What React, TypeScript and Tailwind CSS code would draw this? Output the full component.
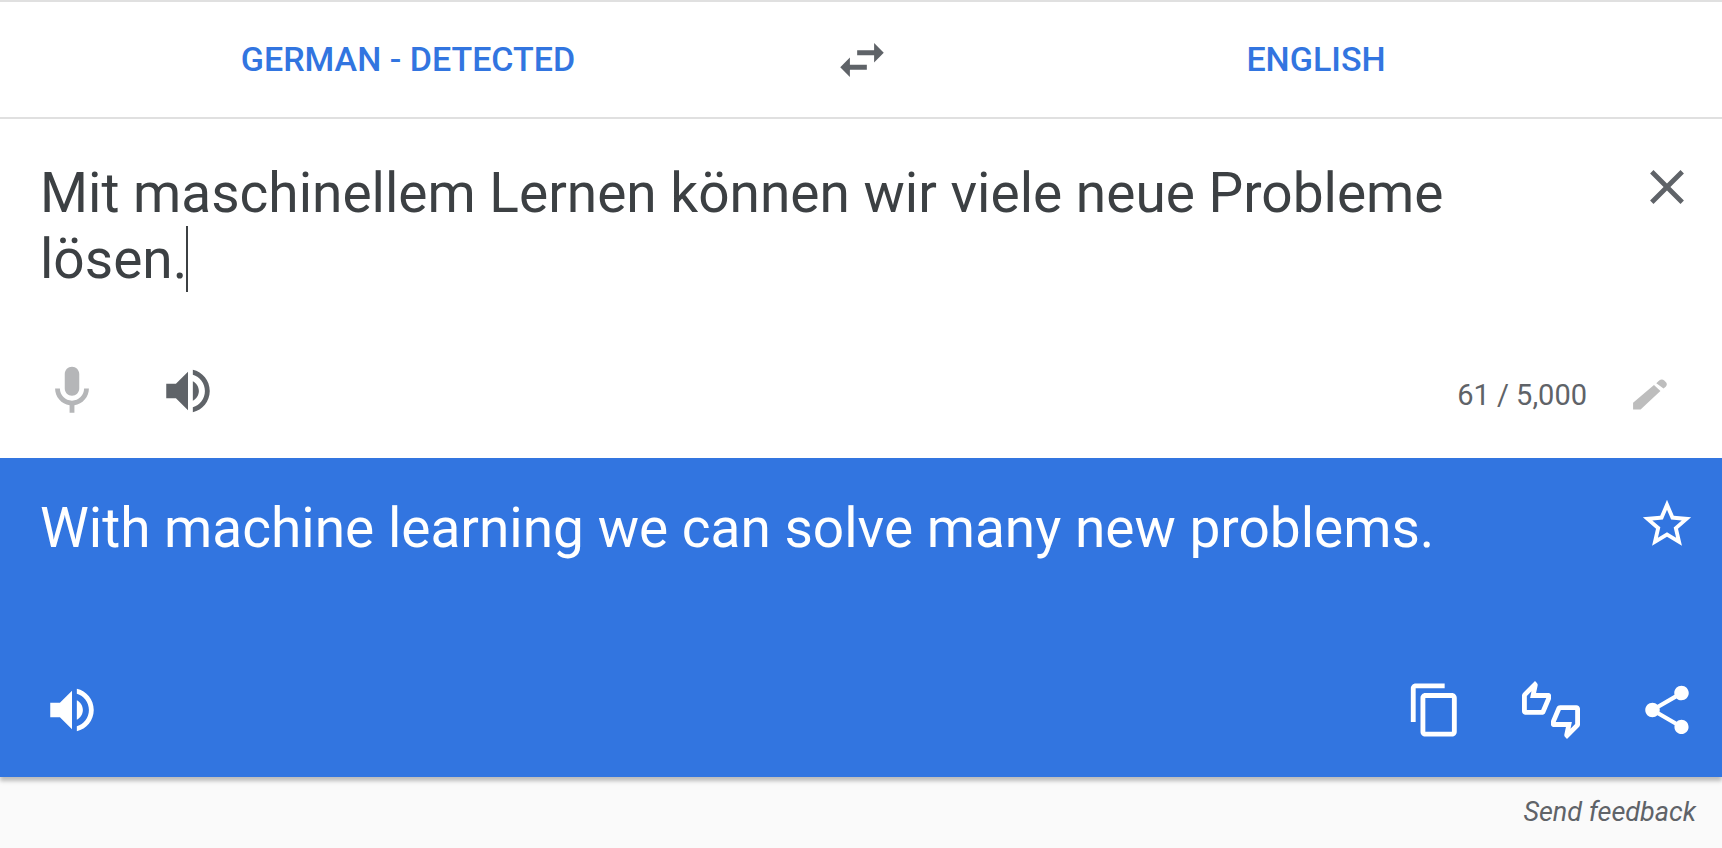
import React, { useState } from "react";

const ICONS = {
  swap: "M6.99 11L3 15l3.99 4v-3H14v-2H6.99v-3zM21 9l-3.99-4v3H10v2h7.01v3L21 9z",
  close: "M19 6.41L17.59 5 12 10.59 6.41 5 5 6.41 10.59 12 5 17.59 6.41 19 12 13.41 17.59 19 19 17.59 13.41 12z",
  mic: "M12 14c1.66 0 3-1.34 3-3V5c0-1.66-1.34-3-3-3S9 3.34 9 5v6c0 1.66 1.34 3 3 3zm5-3c0 2.76-2.24 5-5 5s-5-2.24-5-5H5c0 3.53 2.61 6.43 6 6.92V21h2v-3.08c3.39-.49 6-3.39 6-6.92h-2z",
  volume: "M3 9v6h4l5 5V4L7 9H3zm13.5 3c0-1.77-1.02-3.29-2.5-4.03v8.05c1.48-.73 2.5-2.25 2.5-4.02zM14 3.23v2.06c2.89.86 5 3.54 5 6.71s-2.11 5.85-5 6.71v2.06c4.01-.91 7-4.49 7-8.77s-2.99-7.86-7-8.77z",
  star: "M22 9.24l-7.19-.62L12 2 9.19 8.63 2 9.24l5.46 4.73L5.82 21 12 17.27 18.18 21l-1.63-7.03L22 9.24zM12 15.4l-3.76 2.27 1-4.28-3.32-2.88 4.38-.38L12 6.1l1.71 4.04 4.38.38-3.32 2.88 1 4.28L12 15.4z",
  copy: "M16 1H4c-1.1 0-2 .9-2 2v14h2V3h12V1zm3 4H8c-1.1 0-2 .9-2 2v14c0 1.1.9 2 2 2h11c1.1 0 2-.9 2-2V7c0-1.1-.9-2-2-2zm0 16H8V7h11v14z",
  rate: "M12 6c0-.55-.45-1-1-1H5.82l.66-3.18.02-.23c0-.31-.13-.59-.33-.8L5.38 0 .44 4.94C.17 5.21 0 5.59 0 6v6.5c0 .83.67 1.5 1.5 1.5h6.75c.62 0 1.15-.38 1.38-.91l2.26-5.29c.07-.17.11-.36.11-.55V6zm-2 1.13L7.92 12H2V6.21l1.93-1.93L3.36 7H10v.13zM22.5 10h-6.75c-.62 0-1.15.38-1.38.91l-2.26 5.29c-.07.17-.11.36-.11.55V18c0 .55.45 1 1 1h5.18l-.66 3.18-.02.24c0 .31.13.59.33.8l.79.78 4.94-4.94c.27-.27.44-.65.44-1.06v-6.5c0-.83-.67-1.5-1.5-1.5zm-.5 7.79l-1.93 1.93.57-2.72H14v-.13L16.08 12H22v5.79z",
  share: "M18 16.08c-.76 0-1.44.3-1.96.77L8.91 12.7c.05-.23.09-.46.09-.7s-.04-.47-.09-.7l7.05-4.11c.54.5 1.25.81 2.04.81 1.66 0 3-1.34 3-3s-1.34-3-3-3-3 1.34-3 3c0 .24.04.47.09.7L8.04 9.81C7.5 9.31 6.79 9 6 9c-1.66 0-3 1.34-3 3s1.34 3 3 3c.79 0 1.5-.31 2.04-.81l7.12 4.16c-.05.21-.08.43-.08.65 0 1.61 1.31 2.92 2.92 2.92s2.92-1.31 2.92-2.92-1.31-2.92-2.92-2.92z",
  pencil: "M5 19.7v-2.8l8.65-7.4 2.65 2.5-8.2 7.7zM14.6 8.8l1.2-1.1c.6-.5 1.5-.6 2.1 0l.6.6c.6.6.6 1.3.1 1.8l-1 .9z",
};

function IconButton({ icon, label, className = "" }: { icon: keyof typeof ICONS; label: string; className?: string }) {
  return (
    <button aria-label={label} className={`block shrink-0 ${className}`}>
      <svg viewBox="0 0 24 24" fill="currentColor" className="size-[58px]">
        <path d={ICONS[icon]} />
      </svg>
    </button>
  );
}

export default function App() {
  const [text, setText] = useState("Mit maschinellem Lernen können wir viele neue Probleme lösen.");

  return (
    <div className="min-h-screen bg-[#fafafa] font-['Roboto',sans-serif] text-[#5f6368]">
      <main className="bg-white shadow-[0_4px_4px_rgba(0,0,0,0.25)]">
        <header className="grid h-[119px] grid-cols-[1fr_96px_1fr] items-center border-y-2 border-[#e0e0e0] pl-0.5 text-[34px] font-medium text-[#3275e0]">
          <button className="uppercase">German - Detected</button>
          <IconButton icon="swap" label="Swap languages" className="mx-auto text-[#5f6368]" />
          <button className="uppercase">English</button>
        </header>

        <section className="pb-[38px] pt-[39px]">
          <div className="flex items-start justify-between pl-10 pr-[26px]">
            <div className="relative mt-0.5 w-[1440px]">
              <textarea
                aria-label="Source text"
                rows={2}
                value={text}
                onChange={(e) => setText(e.target.value)}
                className="block w-full resize-none overflow-hidden text-[55px] leading-[66px] text-[#3c4043] caret-transparent outline-none"
              />
              <span className="absolute bottom-0 left-[146px] h-[66px] w-[2px] bg-[#3c4043]" />
            </div>
            <IconButton icon="close" label="Clear source text" />
          </div>
          <div className="flex items-center gap-[58px] px-[43px] pt-[70px]">
            <IconButton icon="mic" label="Translate by voice" className="text-[#b5b6b8]" />
            <IconButton icon="volume" label="Listen to source text" />
            <div className="ml-auto flex items-center gap-[34px]">
              <span className="pt-2 text-[29px] leading-8">61 / 5,000</span>
              <IconButton icon="pencil" label="Handwriting" className="text-[#bdbdbd]" />
            </div>
          </div>
        </section>

        <section className="bg-[#3275e0] pb-[38px] pt-[37px] text-white">
          <div className="flex items-start justify-between pl-10 pr-[26px]">
            <p className="text-[55px] leading-[66px]">With machine learning we can solve many new problems.</p>
            <IconButton icon="star" label="Save translation" />
          </div>
          <div className="flex items-center gap-[58px] pl-[43px] pr-[26px] pt-[120px]">
            <IconButton icon="volume" label="Listen to translation" className="mr-auto" />
            <IconButton icon="copy" label="Copy translation" />
            <IconButton icon="rate" label="Rate this translation" />
            <IconButton icon="share" label="Share translation" />
          </div>
        </section>
      </main>

      <footer className="flex justify-end px-[26px] pt-[19px]">
        <a href="#" className="text-[27px] italic leading-8">
          Send feedback
        </a>
      </footer>
    </div>
  );
}
